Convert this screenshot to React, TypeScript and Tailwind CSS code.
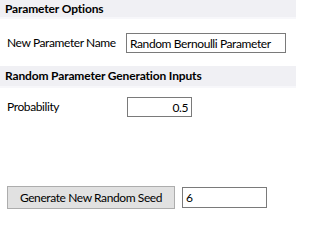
export default function App() {
  return (
    <div
      className="flex h-[219px] w-[296px] flex-col bg-white text-[12px] tracking-[-0.4px] text-black"
      style={{ fontFamily: 'Lato, "Noto Sans", sans-serif' }}
    >
      {/* Parameter Options */}
      <div className="flex h-[19px] items-center border-b-2 border-[#f7f7fa] bg-[#f0f0f4] pl-[5px] font-bold leading-none tracking-[-0.15px]">
        Parameter Options
      </div>
      <div className="mt-[14px] flex h-[20px] items-center">
        <span className="w-[126px] shrink-0 pl-[7px]">New Parameter Name</span>
        <input
          className="h-[20px] w-[160px] border border-[#7a7a7a] px-[3px] text-[12px] tracking-[-0.4px] outline-none"
          defaultValue="Random Bernoulli Parameter"
        />
      </div>

      {/* Random Parameter Generation Inputs */}
      <div className="mt-[13px] flex h-[22px] items-center border-b-2 border-[#f7f7fa] bg-[#f0f0f4] pl-[5px] font-bold leading-none tracking-[-0.15px]">
        Random Parameter Generation Inputs
      </div>
      <div className="mt-[9px] flex h-[20px] items-center">
        <span className="w-[127px] shrink-0 pl-[7px]">Probability</span>
        <input
          className="h-[20px] w-[65px] border border-[#7a7a7a] px-[3px] text-right text-[12px] outline-none"
          defaultValue="0.5"
        />
      </div>

      <div className="mt-[69px] flex items-center pl-[7px]">
        <button className="h-[23px] w-[168px] shrink-0 border border-[#adadad] bg-[#e1e1e1] text-[12px] tracking-[-0.4px]">
          Generate New Random Seed
        </button>
        <input
          className="ml-[7px] h-[21px] w-[85px] border border-[#7a7a7a] px-[3px] text-[12px] outline-none"
          defaultValue="6"
        />
      </div>
    </div>
  );
}
